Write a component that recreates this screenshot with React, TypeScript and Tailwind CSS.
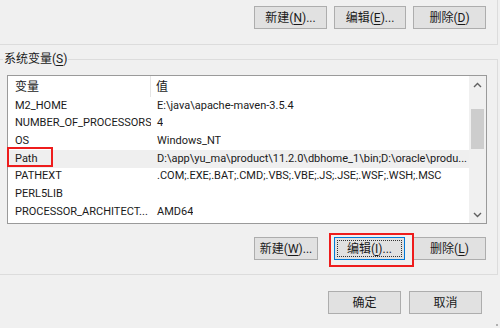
import type { ReactNode } from "react";

const FONT = `Roboto, "Noto Sans CJK SC", sans-serif`;

const rows: [string, string][] = [
  ["M2_HOME", "E:\\java\\apache-maven-3.5.4"],
  ["NUMBER_OF_PROCESSORS", "4"],
  ["OS", "Windows_NT"],
  ["Path", "D:\\app\\yu_ma\\product\\11.2.0\\dbhome_1\\bin;D:\\oracle\\produ..."],
  ["PATHEXT", ".COM;.EXE;.BAT;.CMD;.VBS;.VBE;.JS;.JSE;.WSF;.WSH;.MSC"],
  ["PERL5LIB", ""],
  ["PROCESSOR_ARCHITECT...", "AMD64"],
];

function WinButton({
  children,
  className = "",
  focused = false,
}: {
  children: ReactNode;
  className?: string;
  focused?: boolean;
}) {
  return (
    <div
      className={`h-[23px] flex items-center justify-center text-[12px] text-[#1a1a1a] bg-[#e1e1e1] border ${
        focused ? "border-[#0078d7]" : "border-[#adadad]"
      } ${className}`}
    >
      {focused ? (
        <div className="h-[17px] w-full mx-[2px] flex items-center justify-center border border-dotted border-[#333]">
          {children}
        </div>
      ) : (
        children
      )}
    </div>
  );
}

function Key({ k }: { k: string }) {
  return <span className="underline underline-offset-2">{k}</span>;
}

export default function App() {
  return (
    <div
      className="relative w-[500px] h-[328px] overflow-hidden bg-[#f0f0f0] text-[#1a1a1a]"
      style={{ fontFamily: FONT }}
    >
      {/* user variables group (bottom part) */}
      <div className="w-[498px] h-[45px] border-r border-b border-[#dcdcdc] flex justify-end items-start gap-[7px] pt-[6px] pr-[11px]">
        <WinButton className="w-[73px]">
          新建(<Key k="N" />)...
        </WinButton>
        <WinButton className="w-[72px]">
          编辑(<Key k="E" />)...
        </WinButton>
        <WinButton className="w-[73px]">
          删除(<Key k="D" />)
        </WinButton>
      </div>

      {/* system variables group */}
      <div className="relative mt-[14px] w-[498px] h-[216px] border-t border-r border-b border-[#dcdcdc] flex flex-col">
        <div className="absolute left-[3px] -top-[10px] px-[1px] bg-[#f0f0f0] text-[12px] leading-[18px]">
          系统变量(<Key k="S" />)
        </div>

        <div className="ml-[7px] mt-[15px] w-[480px] h-[149px] border border-[#9a9a9a] bg-white flex">
          <div className="flex-1 flex flex-col text-[11px] min-w-0">
            <div className="h-[21px] flex items-center text-[12px]">
              <div className="w-[143px] h-full flex items-center pl-[7px] border-r border-[#e5e5e5]">变量</div>
              <div className="pl-[5px]">值</div>
            </div>
            {rows.map(([name, value]) => (
              <div
                key={name}
                className={`h-[17.7px] flex items-center whitespace-nowrap ${
                  name === "Path" ? "bg-[#efefef]" : ""
                }`}
              >
                <div className="w-[143px] shrink-0 pl-[7px] overflow-hidden">{name}</div>
                <div className="pl-[6px] overflow-hidden">{value}</div>
              </div>
            ))}
          </div>

          {/* scrollbar */}
          <div className="w-[17px] shrink-0 bg-[#f0f0f0] flex flex-col items-center">
            <div className="h-[17px] w-full flex items-center justify-center">
              <svg width="9" height="6" viewBox="0 0 9 6">
                <path d="M1 5 L4.5 1.5 L8 5" fill="none" stroke="#606060" strokeWidth="1.4" />
              </svg>
            </div>
            <div className="mt-[16px] w-[13px] h-[40px] bg-[#cdcdcd]" />
            <div className="flex-1" />
            <div className="h-[17px] w-full flex items-center justify-center">
              <svg width="9" height="6" viewBox="0 0 9 6">
                <path d="M1 1 L4.5 4.5 L8 1" fill="none" stroke="#606060" strokeWidth="1.4" />
              </svg>
            </div>
          </div>
        </div>

        <div className="mt-[13px] flex justify-end gap-[16px] pr-[11px]">
          <WinButton className="w-[64px]">
            新建(<Key k="W" />)...
          </WinButton>
          <div className="flex gap-[8px]">
            <WinButton className="w-[71px]" focused>
              编辑(<Key k="I" />)...
            </WinButton>
            <WinButton className="w-[73px]">
              删除(<Key k="L" />)
            </WinButton>
          </div>
        </div>
      </div>

      {/* dialog buttons */}
      <div className="mt-[16px] flex justify-end gap-[8px] pr-[18px]">
        <WinButton className="w-[73px]">确定</WinButton>
        <WinButton className="w-[73px]">取消</WinButton>
      </div>

      {/* resize grip */}
      <div className="absolute right-[2px] bottom-[2px] w-[2px] h-[2px] bg-[#b0b0b0]" />

      {/* red annotation boxes */}
      <div className="absolute left-[7px] top-[147px] w-[46px] h-[20px] border-2 border-[#ee1c1c]" />
      <div className="absolute left-[329px] top-[233px] w-[85px] h-[34px] border-2 border-[#ee1c1c]" />
    </div>
  );
}
